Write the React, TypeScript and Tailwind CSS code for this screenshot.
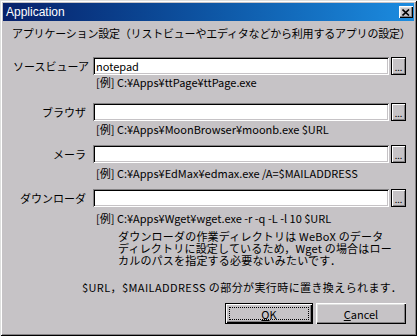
import type { ReactNode } from 'react';

const sunken =
  'shadow-[inset_1px_1px_#848284,inset_-1px_-1px_#ffffff,inset_2px_2px_#000000,inset_-2px_-2px_#c6c3c6]';
const raised =
  'shadow-[inset_1px_1px_#ffffff,inset_-1px_-1px_#000000,inset_-2px_-2px_#848284,inset_2px_2px_#dedfde]';

function Field({
  label,
  labelClass,
  value,
  rowClass,
  example,
  exampleClass,
}: {
  label: string;
  labelClass: string;
  value?: string;
  rowClass: string;
  example: string;
  exampleClass: string;
}) {
  return (
    <>
      <div className={`flex items-center h-[18px] ${rowClass}`}>
        <div className={`w-[77px] text-right whitespace-nowrap leading-[13px] ${labelClass}`}>{label}</div>
        <div className={`ml-[4px] w-[296px] h-[18px] bg-white flex items-center pl-[3px] leading-[13px] ${sunken}`}>
          {value}
        </div>
        <button
          className="ml-[2px] w-[15px] h-[18px] border border-black bg-[#c6c3c6] flex items-end justify-center pb-[2px] text-[9px] leading-[8px] shadow-[inset_1px_1px_#ffffff,inset_-1px_-1px_#848284]"
        >
          ...
        </button>
      </div>
      <div className={`ml-[84px] leading-[13px] whitespace-nowrap ${exampleClass}`}>{example}</div>
    </>
  );
}

function Button({ children, primary, className }: { children: ReactNode; primary?: boolean; className: string }) {
  if (primary) {
    return (
      <div
        className={`h-[21px] border border-black bg-[#c6c3c6] flex shadow-[inset_1px_1px_#ffffff,inset_-1px_-1px_#000000,inset_-2px_-2px_#848284] ${className}`}
      >
        <div className="m-[3px] flex-1 border border-dotted border-black flex items-center justify-center leading-[12px]">
          {children}
        </div>
      </div>
    );
  }
  return (
    <div className={`h-[21px] bg-[#c6c3c6] flex items-center justify-center leading-[12px] ${raised} ${className}`}>
      {children}
    </div>
  );
}

export default function App() {
  return (
    <div className="w-[417px] h-[336px] bg-[#c6c3c6] p-[3px] flex flex-col text-black text-[11px] font-['Noto_Sans_CJK_JP',sans-serif] shadow-[inset_1px_1px_#dedfde,inset_-1px_-1px_#000000,inset_2px_2px_#ffffff,inset_-2px_-2px_#848284]">
      {/* title bar */}
      <div className="h-[18px] flex items-center justify-between bg-gradient-to-r from-[#08216b] to-[#1c8ce0]">
        <span className="pl-[3px] text-white text-[12px] font-['Liberation_Sans',sans-serif]">Application</span>
        <div className={`mr-[1px] w-[14px] h-[12px] bg-[#c6c3c6] flex items-center justify-center ${raised}`}>
          <svg width="8" height="7" viewBox="0 0 8 7">
            <path d="M0.5 0.5 L7 6.5 M7 0.5 L0.5 6.5" stroke="#000" strokeWidth="1.6" />
          </svg>
        </div>
      </div>

      <div className="flex flex-col pl-[9px]">
        <div className="mt-[6px] leading-[13px] whitespace-nowrap tracking-[-0.2px]">
          アプリケーション設定（リストビューやエディタなどから利用するアプリの設定）
        </div>

        <Field
          label="ソースビューア"
          labelClass=""
          value="notepad"
          rowClass="mt-[17px]"
          example="[例] C:¥Apps¥ttPage¥ttPage.exe"
          exampleClass="mt-px"
        />
        <Field
          label="ブラウザ"
          labelClass="pr-[3px]"
          rowClass="mt-[14px]"
          example="[例] C:¥Apps¥MoonBrowser¥moonb.exe $URL"
          exampleClass="mt-[2px]"
        />
        <Field
          label="メーラ"
          labelClass="pr-[3px]"
          rowClass="mt-[9px]"
          example="[例] C:¥Apps¥EdMax¥edmax.exe /A=$MAILADDRESS"
          exampleClass="mt-[4px]"
        />
        <Field
          label="ダウンローダ"
          labelClass="pr-[3px]"
          rowClass="mt-[9px]"
          example="[例] C:¥Apps¥Wget¥wget.exe -r -q -L -l 10 $URL"
          exampleClass="mt-[5px]"
        />

        <div className="mt-[5px] ml-[106px] leading-[12px] whitespace-nowrap tracking-[0.2px]">
          ダウンローダの作業ディレクトリは WeBoX のデータ
          <br />
          ディレクトリに設定しているため，Wget の場合はロー
          <br />
          カルのパスを指定する必要ないみたいです．
        </div>

        <div className="mt-[15px] ml-[70px] leading-[13px] whitespace-nowrap tracking-[0.4px]">
          $URL，$MAILADDRESS の部分が実行時に置き換えられます．
        </div>

        <div className="mt-[9px] flex justify-end gap-[3px] pr-[8px]">
          <Button primary className="w-[88px]">
            <span>
              <u>O</u>K
            </span>
          </Button>
          <Button className="w-[90px]">
            <span>
              <u>C</u>ancel
            </span>
          </Button>
        </div>
      </div>
    </div>
  );
}
